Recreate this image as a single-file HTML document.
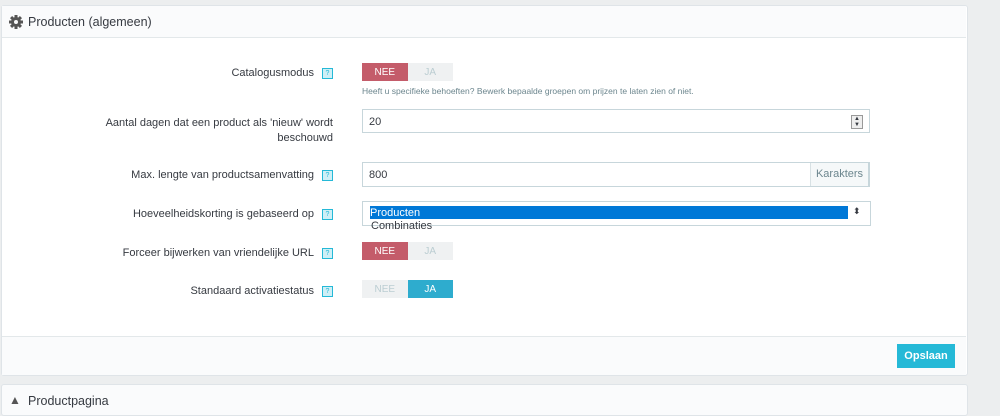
<!DOCTYPE html>
<html><head><style>
body{margin:0;width:1000px;height:400px;background:#eceeef;font-family:"Liberation Sans",sans-serif;font-size:11px;color:#363a41;position:relative;overflow:hidden}
.a{position:absolute}
.panel{left:1px;width:965px;background:#fff;border:1px solid #dfe4e8;border-radius:3px}
.lbl{right:667px;text-align:right;width:260px;font-size:11px}
.q{display:inline-block;width:9px;height:9px;border:1px solid #25b9d7;background:#cfeff6;color:#25b9d7;font-size:7px;line-height:9px;text-align:center;margin-left:8px;vertical-align:middle}
.sw{width:91px;height:18px;display:flex;font-size:10px;line-height:19px;text-align:center}
.sw div{flex:1;background:#eff1f2;color:#bbcdd2}
.sw .n{background:#c45c6a;color:#fff}
.sw .y{background:#2eacce;color:#fff}
.inp{border:1px solid #c7d6db;background:#fff;height:22px;line-height:22px;padding-left:6px;box-sizing:border-box}
</style></head><body>
<div class="a panel" style="top:5px;height:369px"></div>
<div class="a" style="left:2px;top:6px;width:964px;height:31px;background:#fafbfc;border-bottom:1px solid #e3e8ea"></div>
<svg class="a" style="left:9px;top:15px" width="14" height="14" viewBox="0 0 14 14">
<g fill="#555"><rect x="5.5" y="0" width="3" height="14"/><rect x="0" y="5.5" width="14" height="3"/>
<rect x="5.5" y="0" width="3" height="14" transform="rotate(45 7 7)"/><rect x="5.5" y="0" width="3" height="14" transform="rotate(-45 7 7)"/>
<circle cx="7" cy="7" r="5"/></g><circle cx="7" cy="7" r="2" fill="#fafbfc"/></svg>
<div class="a" style="left:28px;top:15px;font-size:12.5px;color:#363a41">Producten (algemeen)</div>

<div class="a lbl" style="top:67px">Catalogusmodus<span class="q">?</span></div>
<div class="a sw" style="left:362px;top:63px"><div class="n">NEE</div><div>JA</div></div>
<div class="a" style="left:362px;top:86px;font-size:8.5px;color:#6c868e">Heeft u specifieke behoeften? Bewerk bepaalde groepen om prijzen te laten zien of niet.</div>

<div class="a lbl" style="top:116px;line-height:15px;right:667px;width:230px">Aantal dagen dat een product als 'nieuw' wordt<br>beschouwd</div>
<div class="a inp" style="left:362px;top:109px;width:508px;height:24px;line-height:24px">20</div>
<div class="a" style="left:851px;top:115px;width:10px;height:12px;border:1px solid #999;background:#eee;font-size:6px;line-height:6px;text-align:center">▲<br>▼</div>

<div class="a lbl" style="top:169px">Max. lengte van productsamenvatting<span class="q">?</span></div>
<div class="a inp" style="left:362px;top:162px;width:508px;height:25px;line-height:25px">800</div>
<div class="a" style="left:810px;top:163px;width:59px;height:23px;line-height:23px;background:#f5f8f9;border-left:1px solid #d8e1e4;border-right:1px solid #c7d6db;color:#6c868e;text-align:center;box-sizing:border-box">Karakters</div>

<div class="a lbl" style="top:208px">Hoeveelheidskorting is gebaseerd op<span class="q">?</span></div>
<div class="a" style="left:362px;top:201px;width:507px;height:23px;border:1px solid #c7d6db;background:#fff"></div>
<div class="a" style="left:370px;top:206px;width:478px;height:13px;background:#0078d7;color:#fff;line-height:14px">Producten</div>
<div class="a" style="left:853px;top:206px;font-size:9px">⬍</div>
<div class="a" style="left:371px;top:220px">Combinaties</div>

<div class="a lbl" style="top:247px">Forceer bijwerken van vriendelijke URL<span class="q">?</span></div>
<div class="a sw" style="left:362px;top:242px"><div class="n">NEE</div><div>JA</div></div>

<div class="a lbl" style="top:285px">Standaard activatiestatus<span class="q">?</span></div>
<div class="a sw" style="left:362px;top:280px"><div>NEE</div><div class="y">JA</div></div>

<div class="a" style="left:2px;top:336px;width:964px;height:38px;background:#fafbfc;border-top:1px solid #e3e8ea"></div>
<div class="a" style="left:897px;top:344px;width:58px;height:24px;background:#25b9d7;color:#fff;text-align:center;line-height:25px;font-size:11px;font-weight:bold">Opslaan</div>

<div class="a panel" style="top:384px;height:30px;background:#fafbfc"></div>
<div class="a" style="left:9px;top:393px;font-size:12px;color:#555">▲</div>
<div class="a" style="left:28px;top:394px;font-size:12.5px">Productpagina</div>
</body></html>
